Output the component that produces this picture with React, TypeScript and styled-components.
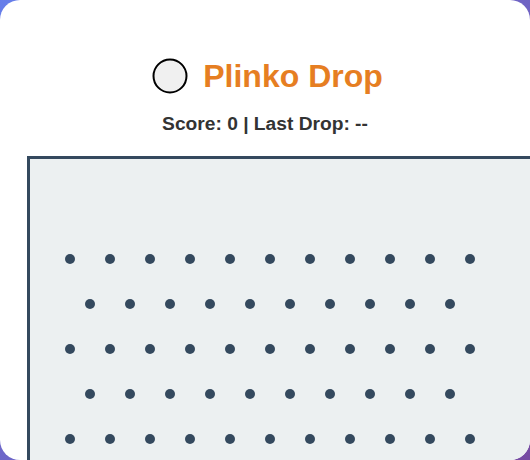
import React from "react";
import styled, { createGlobalStyle } from "styled-components";

const GlobalStyle = createGlobalStyle`
  html, body {
    margin: 0;
    padding: 0;
  }
  body {
    width: 530px;
    height: 460px;
    overflow: hidden;
    background: linear-gradient(135deg, #667eea 0%, #764ba2 100%);
    font-family: "Liberation Sans", Arial, sans-serif;
  }
`;

const Card = styled.main`
  box-sizing: border-box;
  width: 530px;
  height: 460px;
  padding: 56px 27px 0;
  background: #ffffff;
  border-radius: 20px;
  overflow: hidden;
  display: flex;
  flex-direction: column;
  align-items: flex-start;
`;

const Title = styled.h1`
  align-self: stretch;
  margin: 0 0 17px;
  padding-left: 5px;
  display: flex;
  justify-content: center;
  align-items: center;
  gap: 15px;
  height: 40px;
  line-height: 40px;
  font-size: 32px;
  font-weight: 700;
  color: #e67e22;
`;

const Scoreline = styled.p`
  align-self: stretch;
  margin: 0 0 21px;
  text-align: center;
  font-size: 19.2px;
  font-weight: 700;
  line-height: 22px;
  color: #333333;
`;

const Board = styled.section`
  flex: none;
  box-sizing: border-box;
  width: 600px;
  height: 520px;
  border: 3px solid #34495e;
  background: #ecf0f1;
  padding-top: 95px;
  display: flex;
  flex-direction: column;
  gap: 35px;
`;

const PegRow = styled.div<{ $offset: number }>`
  display: flex;
  gap: 30px;
  padding-left: ${(p) => p.$offset}px;
`;

const Peg = styled.span`
  flex: none;
  width: 10px;
  height: 10px;
  border-radius: 50%;
  background: #34495e;
`;

const BallIcon = () => (
  <svg width="36" height="36" viewBox="0 0 36 36" aria-hidden="true">
    <circle cx="18" cy="18" r="16.5" fill="#f0f0f0" stroke="#000" strokeWidth="2" />
  </svg>
);

const rows = [0, 1, 2, 3, 4, 5, 6];

export default function App() {
  return (
    <>
      <GlobalStyle />
      <Card>
        <Title>
          <BallIcon />
          <span>Plinko Drop</span>
        </Title>
        <Scoreline>Score: 0 | Last Drop: --</Scoreline>
        <Board>
          {rows.map((r) => {
            const wide = r % 2 === 0;
            const count = wide ? 11 : 10;
            return (
              <PegRow key={r} $offset={wide ? 35 : 55}>
                {Array.from({ length: count }, (_, i) => (
                  <Peg key={i} />
                ))}
              </PegRow>
            );
          })}
        </Board>
      </Card>
    </>
  );
}
